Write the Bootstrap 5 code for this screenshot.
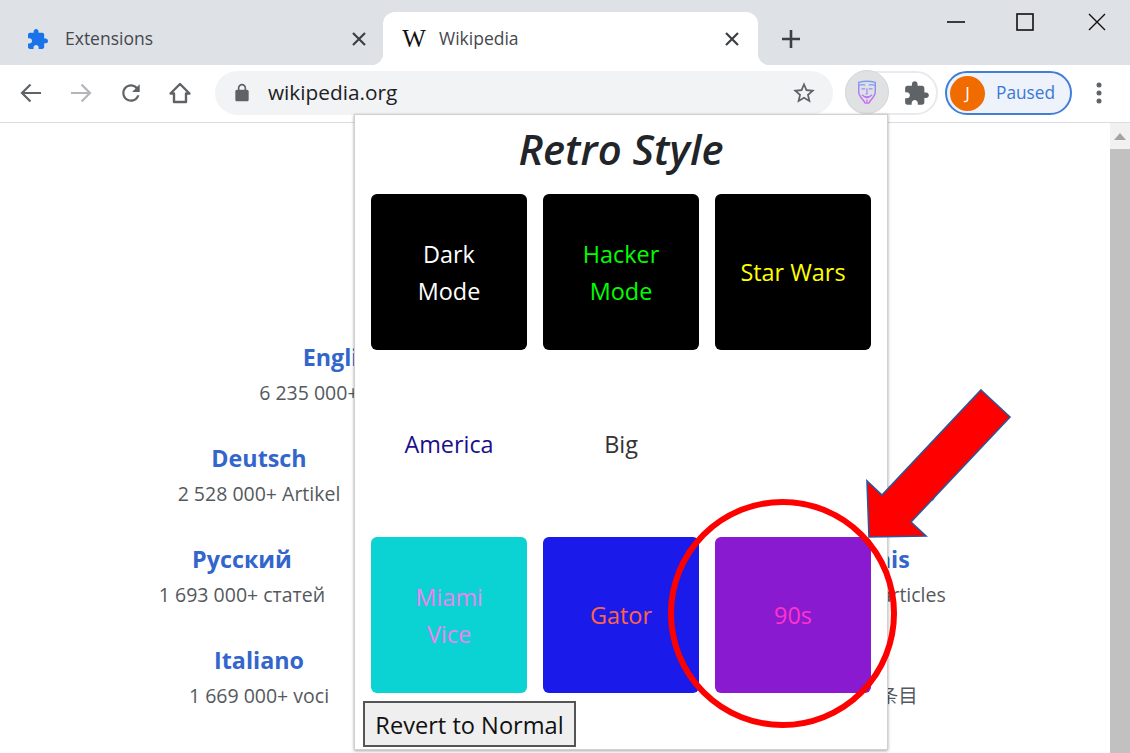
<!DOCTYPE html>
<html lang="en">
<head>
<meta charset="utf-8">
<title>Retro Style</title>
<link rel="stylesheet" href="https://cdn.jsdelivr.net/npm/bootstrap@5.3.0/dist/css/bootstrap.min.css">
<style>
html,body{height:753px;overflow:hidden;background:#fff;font-family:"Open Sans","Noto Sans CJK SC",sans-serif}
.shell{width:1130px;height:753px;position:relative;overflow:hidden}
.tabstrip{height:65px;background:#dee1e6;flex:none}
.tab-idle{width:383px;height:53px;margin-top:12px;padding:0 16px 0 28px;color:#45484d;font-size:17.5px}
.tab-on{width:375px;height:53px;margin-top:12px;padding:0 18px 0 19px;background:#fff;border-radius:12px 12px 0 0;position:relative;color:#45484d;font-size:17.5px}
.tab-on::before,.tab-on::after{content:"";position:absolute;bottom:0;width:12px;height:12px}
.tab-on::before{left:-12px;background:radial-gradient(circle at 0 0,transparent 12px,#fff 12.5px)}
.tab-on::after{right:-12px;background:radial-gradient(circle at 100% 0,transparent 12px,#fff 12.5px)}
.tab-ttl{margin-left:17px}
.tab-ttl-w{margin-left:13px}
.wiki-w{font-family:"Liberation Serif",serif;font-size:25px;color:#111;width:24px;line-height:1;text-align:center}
.newtab{margin-left:23px;margin-top:12px;height:53px}
.winctl{margin-left:auto;height:30px;width:183px;padding:0 24px 0 0;margin-top:7px}
.maxicon{margin-right:3px}
.toolbar{height:58px;flex:none;border-bottom:1px solid #dadce0;padding:0 0 1px 0;background:#fff}
.navgroup{width:215px;padding-left:19px;gap:26px}
.homeicon{margin-left:-1px}
.omni{width:618px;height:44px;border-radius:22px;background:#f1f3f4;padding:0 16px 0 17px;color:#202124;font-size:20.8px}
.omni-text{margin-left:16px}
.extpill{width:93px;height:44px;margin-left:12px;border:2px solid #e8eaed;border-radius:22px;position:relative}
.exthi{width:44px;height:44px;border-radius:50%;background:#e0e1e3;margin:-2px 0 0 -2px;border:1px solid #d5d6d8}
.puzzle{margin-left:15px}
.profile{width:127px;height:44px;margin-left:7px;border:2px solid #3f7fd8;border-radius:22px;background:#edf2fb;color:#3b78d6;font-size:17.3px;padding-left:3px}
.avatar{width:35px;height:35px;border-radius:50%;background:#f06c00;color:#fff;font-size:17px;margin-right:11px}
.kebab{margin-left:24px}
.pagearea{flex:1;min-height:0}
.wikimain{flex:1;padding-top:216px;min-width:0}
.lang-row{height:101px}
.lang{width:300px;text-align:center;color:#54595d;font-size:19.5px;flex:none}
.lang b{display:block;color:#3366cc;font-size:23.3px;font-weight:700;line-height:37px}
.lang span{display:block;line-height:34px;white-space:nowrap}
.c343{margin-left:194px}.c259{margin-left:109px}.c242{margin-left:92px}
.r844{margin-left:auto;margin-right:116px}.r861{margin-left:auto;margin-right:99px}.r846{margin-left:auto;margin-right:114px}
.vscroll{width:20px;background:#f1f1f1;flex:none}
.scrollup{height:26px}
.scrollthumb{flex:1;background:#c1c1c1}
.popup{position:absolute;left:354px;top:114px;width:534px;height:636px;background:#fff;border:1px solid #d0d0d0;box-shadow:0 1px 3px rgba(0,0,0,.35);padding:0 16px}
.popup-ttl{height:79px;margin:0;padding-bottom:12px;font-size:41.8px;font-style:italic;font-weight:600;color:#212529;line-height:1}
.tiles{display:grid;grid-template-columns:repeat(3,156px);grid-auto-rows:156px;column-gap:16px;row-gap:15.5px}
.tile{border-radius:6px;font-size:23.4px;line-height:37px;padding-top:1px}
.t-dark{background:#000;color:#fff}.t-hack{background:#000;color:#0f0}.t-star{background:#000;color:#ff0}
.t-amer{color:#1a0f8c}.t-big{color:#333}
.t-miami{background:#0bd3d3;color:#ee82ee}.t-gator{background:#1a1aea;color:#ff6347}.t-ninety{background:#8a1acf;color:#ff33cc}
.revert{margin:8px 0 0 -8px;width:213px;height:46px;padding:4px 0 0;border:2px solid #555;border-radius:0;background:#efefef;color:#111;font-size:23.6px;line-height:1}
.revert:hover{background:#efefef;color:#111;border-color:#555}
.annot{position:absolute;left:0;top:0;pointer-events:none}
</style>
</head>
<body>
<div class="shell d-flex flex-column">
  <div class="tabstrip d-flex align-items-start">
    <div class="tab-idle d-flex align-items-center">
      <svg width="20" height="22" viewBox="2 1 21 21"><path fill="#1a73e8" d="M20.5 11H19V7c0-1.1-.9-2-2-2h-4V3.5C13 2.12 11.88 1 10.5 1S8 2.12 8 3.5V5H4c-1.1 0-1.99.9-1.99 2v3.8H3.5c1.49 0 2.7 1.21 2.7 2.7s-1.21 2.7-2.7 2.7H2V20c0 1.1.9 2 2 2h3.8v-1.5c0-1.49 1.21-2.7 2.7-2.7 1.49 0 2.7 1.21 2.7 2.7V22H17c1.1 0 2-.9 2-2v-4h1.5c1.38 0 2.5-1.12 2.5-2.5S21.88 11 20.5 11z"/></svg>
      <span class="tab-ttl">Extensions</span>
      <svg class="ms-auto" width="16" height="16" viewBox="0 0 16 16"><path d="M2 2l12 12M14 2L2 14" stroke="#3c4043" stroke-width="2.2" fill="none"/></svg>
    </div>
    <div class="tab-on d-flex align-items-center">
      <span class="wiki-w">W</span>
      <span class="tab-ttl-w">Wikipedia</span>
      <svg class="ms-auto" width="16" height="16" viewBox="0 0 16 16"><path d="M2 2l12 12M14 2L2 14" stroke="#3c4043" stroke-width="2.2" fill="none"/></svg>
    </div>
    <div class="newtab d-flex align-items-center">
      <svg width="20" height="20" viewBox="0 0 20 20"><path d="M10 1v18M1 10h18" stroke="#3c4043" stroke-width="2.6" fill="none"/></svg>
    </div>
    <div class="winctl d-flex align-items-center justify-content-between">
      <svg width="18" height="18" viewBox="0 0 18 18"><path d="M0 9h18" stroke="#111" stroke-width="1.6"/></svg>
      <svg class="maxicon" width="18" height="18" viewBox="0 0 18 18"><rect x="1" y="1" width="16" height="16" fill="none" stroke="#111" stroke-width="1.6"/></svg>
      <svg width="18" height="18" viewBox="0 0 18 18"><path d="M1 1l16 16M17 1L1 17" stroke="#111" stroke-width="1.4" fill="none"/></svg>
    </div>
  </div>
  <div class="toolbar d-flex align-items-center">
    <div class="navgroup d-flex align-items-center">
      <svg width="24" height="24" viewBox="0 0 24 24"><path d="M22 12H3M11.5 3.5L3 12l8.5 8.5" stroke="#5f6368" stroke-width="2.2" fill="none"/></svg>
      <svg width="24" height="24" viewBox="0 0 24 24"><path d="M2 12h19M12.5 3.5L21 12l-8.5 8.5" stroke="#b4b6b9" stroke-width="2.2" fill="none"/></svg>
      <svg width="24" height="24" viewBox="1 1 22 22"><path fill="#5f6368" d="M17.65 6.35C16.2 4.9 14.21 4 12 4c-4.42 0-7.99 3.58-7.99 8s3.57 8 7.99 8c3.73 0 6.84-2.55 7.73-6h-2.08c-.82 2.33-3.04 4-5.65 4-3.31 0-6-2.69-6-6s2.69-6 6-6c1.66 0 3.14.69 4.22 1.78L13 11h7V4l-2.35 2.35z"/></svg>
      <svg class="homeicon" width="24" height="24" viewBox="0 0 24 24"><path d="M12 3L2.5 12.5H6V21h12v-8.5h3.5z" stroke="#5f6368" stroke-width="2.4" fill="none" stroke-linejoin="round"/></svg>
    </div>
    <div class="omni d-flex align-items-center">
      <svg width="20" height="20" viewBox="0 0 24 24"><path fill="#5f6368" d="M18 8h-1V6c0-2.76-2.24-5-5-5S7 3.24 7 6v2H6c-1.1 0-2 .9-2 2v10c0 1.1.9 2 2 2h12c1.1 0 2-.9 2-2V10c0-1.1-.9-2-2-2zM9 8V6c0-1.66 1.34-3 3-3s3 1.34 3 3v2H9z"/></svg>
      <span class="omni-text">wikipedia.org</span>
      <svg class="ms-auto" width="26" height="26" viewBox="0 0 24 24"><path fill="#5f6368" d="M22 9.24l-7.19-.62L12 2 9.19 8.63 2 9.24l5.46 4.73L5.82 21 12 17.27 18.18 21l-1.63-7.03L22 9.24zM12 15.4l-3.76 2.27 1-4.28-3.32-2.88 4.38-.38L12 6.1l1.71 4.04 4.38.38-3.32 2.88 1 4.28L12 15.4z"/></svg>
    </div>
    <div class="extpill d-flex align-items-center">
      <div class="exthi d-flex align-items-center justify-content-center">
        <svg width="22" height="26" viewBox="0 0 24 28">
          <defs><linearGradient id="mask" x1="0" y1="0" x2="0" y2="1"><stop offset="0" stop-color="#7d9cf8"/><stop offset="1" stop-color="#d068f2"/></linearGradient></defs>
          <path d="M3 3.5C9 1.8 15 1.8 21 3.5V14C21 19 16 22 14 26H10C8 22 3 19 3 14z" fill="none" stroke="url(#mask)" stroke-width="1.6"/>
          <path d="M3 7C6 5.5 8 5.5 10 6.5M21 7C18 5.500 16 5.500 14 6.500M6 10.500h4M14 10.500h4M12 10v6h-1.500M6.500 17C9 20 15 20 17.500 17M9 19.500c2 1 4 1 6 0M12 22v3" fill="none" stroke="url(#mask)" stroke-width="1.3"/>
        </svg>
      </div>
      <svg class="puzzle" width="26" height="26" viewBox="1 0 23 23"><path fill="#5f6368" d="M20.5 11H19V7c0-1.1-.9-2-2-2h-4V3.5C13 2.12 11.88 1 10.5 1S8 2.12 8 3.5V5H4c-1.1 0-1.99.9-1.99 2v3.8H3.5c1.49 0 2.7 1.21 2.7 2.7s-1.21 2.7-2.7 2.7H2V20c0 1.1.9 2 2 2h3.8v-1.5c0-1.49 1.21-2.7 2.7-2.7 1.49 0 2.7 1.21 2.7 2.7V22H17c1.1 0 2-.9 2-2v-4h1.5c1.38 0 2.5-1.12 2.5-2.5S21.88 11 20.5 11z"/></svg>
    </div>
    <div class="profile d-flex align-items-center">
      <div class="avatar d-flex align-items-center justify-content-center">J</div>
      <span>Paused</span>
    </div>
    <svg class="kebab" width="6" height="24" viewBox="0 0 6 24"><circle cx="3" cy="4" r="2.5" fill="#5f6368"/><circle cx="3" cy="12" r="2.5" fill="#5f6368"/><circle cx="3" cy="20" r="2.5" fill="#5f6368"/></svg>
  </div>
  <div class="pagearea d-flex">
    <div class="wikimain">
      <div class="lang-row d-flex"><div class="lang c343"><b>English</b><span>6 235 000+ articles</span></div></div>
      <div class="lang-row d-flex"><div class="lang c259"><b>Deutsch</b><span>2 528 000+ Artikel</span></div><div class="lang r844"><b>Español</b><span>1 659 000+ artículos</span></div></div>
      <div class="lang-row d-flex"><div class="lang c242"><b>Русский</b><span>1 693 000+ статей</span></div><div class="lang r861"><b>Français</b><span>2 423 000+ articles</span></div></div>
      <div class="lang-row d-flex"><div class="lang c259"><b>Italiano</b><span>1 669 000+ voci</span></div><div class="lang r846"><b>中文</b><span>1 155 000+ 条目</span></div></div>
    </div>
    <div class="vscroll d-flex flex-column">
      <div class="scrollup d-flex align-items-center justify-content-center">
        <svg width="12" height="7" viewBox="0 0 12 7"><path d="M6 0l6 7H0z" fill="#a3a3a3"/></svg>
      </div>
      <div class="scrollthumb"></div>
    </div>
  </div>

  <div class="popup">
    <h1 class="popup-ttl d-flex align-items-center justify-content-center">Retro Style</h1>
    <div class="tiles">
      <div class="tile t-dark d-flex align-items-center justify-content-center text-center">Dark<br>Mode</div>
      <div class="tile t-hack d-flex align-items-center justify-content-center text-center">Hacker<br>Mode</div>
      <div class="tile t-star d-flex align-items-center justify-content-center text-center">Star Wars</div>
      <div class="tile t-amer d-flex align-items-center justify-content-center text-center">America</div>
      <div class="tile t-big d-flex align-items-center justify-content-center text-center">Big</div>
      <div class="tile"></div>
      <div class="tile t-miami d-flex align-items-center justify-content-center text-center">Miami<br>Vice</div>
      <div class="tile t-gator d-flex align-items-center justify-content-center text-center">Gator</div>
      <div class="tile t-ninety d-flex align-items-center justify-content-center text-center">90s</div>
    </div>
    <button type="button" class="btn revert">Revert to Normal</button>
  </div>

  <svg class="annot" width="1130" height="753" viewBox="0 0 1130 753">
    <path d="M981 390L1010 417L911 522L926 536L869 537L867 481L882 495Z" fill="#f00" stroke="#2f5597" stroke-width="1.6"/>
    <circle cx="782.5" cy="613.5" r="111.5" fill="none" stroke="#f00" stroke-width="6"/>
  </svg>
</div>
</body>
</html>
